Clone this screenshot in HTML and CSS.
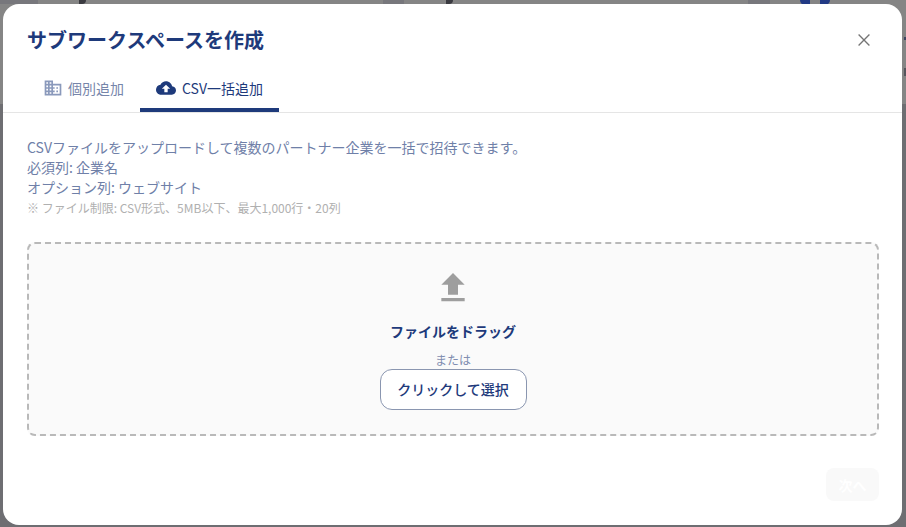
FILE: index.html
```html
<!DOCTYPE html>
<html lang="ja">
<head>
<meta charset="utf-8">
<title>サブワークスペースを作成</title>
<link rel="stylesheet" href="styles.css">
</head>
<body>
<div class="backdrop" aria-hidden="true">
  <i class="cell cell-a"></i>
  <i class="cell cell-b"></i>
  <i class="cell cell-c"></i>
  <i class="mark mark-a"></i>
  <i class="mark mark-b"></i>
  <i class="blue blue-a"></i>
  <i class="blue blue-b"></i>
  <i class="edge edge-a"></i>
  <i class="edge edge-b"></i>
</div>
<div class="modal">
  <header class="head">
    <h2 class="title">サブワークスペースを作成</h2>
    <button class="close" aria-label="閉じる">
      <svg viewBox="0 0 24 24" width="20" height="20"><path d="M5.5 5.5 18.5 18.5M18.5 5.5 5.5 18.5" fill="none" stroke="#757575" stroke-width="1.6"/></svg>
    </button>
  </header>
  <nav class="tabs">
    <div class="tab first">
      <svg viewBox="0 0 24 24" width="20" height="20" fill="#8a99bb"><path d="M12 7V3H2v18h20V7H12zM6 19H4v-2h2v2zm0-4H4v-2h2v2zm0-4H4V9h2v2zm0-4H4V5h2v2zm4 12H8v-2h2v2zm0-4H8v-2h2v2zm0-4H8V9h2v2zm0-4H8V5h2v2zm10 12h-8v-2h2v-2h-2v-2h2v-2h-2V9h8v10zm-2-8h-2v2h2v-2zm0 4h-2v2h2v-2z"/></svg>
      <span>個別追加</span>
    </div>
    <div class="tab active">
      <svg viewBox="0 0 24 24" width="20" height="20" fill="#1e3a7b"><path d="M19.35 10.04C18.67 6.59 15.64 4 12 4 9.11 4 6.6 5.64 5.35 8.04 2.34 8.36 0 10.91 0 14c0 3.31 2.69 6 6 6h13c2.76 0 5-2.24 5-5 0-2.64-2.05-4.78-4.65-4.96zM14 13v4h-4v-4H7l5-5 5 5h-3z"/></svg>
      <span>CSV一括追加</span>
    </div>
  </nav>
  <section class="body">
    <p class="desc">CSVファイルをアップロードして複数のパートナー企業を一括で招待できます。<br>必須列: 企業名<br>オプション列: ウェブサイト</p>
    <p class="note">※ ファイル制限: CSV形式、5MB以下、最大1,000行・20列</p>
    <div class="drop">
      <svg class="upload" viewBox="0 0 24 24" width="40" height="40" fill="#9e9e9e"><path d="M9 16h6v-6h4l-7-7-7 7h4zm-4 2h14v2H5z"/></svg>
      <div class="drag">ファイルをドラッグ</div>
      <div class="or">または</div>
      <button class="pick">クリックして選択</button>
    </div>
  </section>
  <footer class="foot">
    <button class="next" disabled>次へ</button>
  </footer>
</div>
</body>
</html>
```
FILE: styles.css
```css
* { box-sizing: border-box; }
html, body { height: 100%; }
body {
  margin: 0;
  background: #6e6e72;
  padding: 4px 4px 2px 3px;
  font-family: "Noto Sans CJK JP", "Noto Sans", sans-serif;
  overflow: hidden;
}
.backdrop {
  position: absolute;
  inset: 0 0 auto 0;
  height: 104px;
  background: #858585;
}
.backdrop i { position: absolute; display: block; }
.cell { top: 0; height: 4px; background: #77777c; }
.cell-a { left: 0; width: 38px; }
.cell-b { left: 383px; width: 21px; }
.cell-c { left: 748px; width: 22px; }
.mark { top: 0; width: 7px; height: 4px; background: #3a3a40; border-radius: 0 0 4px 0; }
.mark-a { left: 79px; }
.mark-b { left: 446px; }
.blue { top: 0; width: 10px; height: 5px; background: #223a85; }
.blue-a { left: 800px; border-radius: 0 0 0 6px; }
.blue-b { left: 820px; border-radius: 0 0 6px 0; }
.edge { left: 904px; width: 2px; background: #3d4460; }
.edge-a { top: 37px; height: 3px; }
.edge-b { top: 68px; height: 8px; background: #55555c; }
.modal {
  position: relative;
  height: 521px;
  background: #fff;
  border-radius: 16px;
  display: flex;
  flex-direction: column;
}
.head {
  display: flex;
  align-items: flex-start;
  justify-content: space-between;
  padding: 20px 24px 0;
  height: 65px;
}
.title {
  margin: 0;
  font-size: 20px;
  line-height: 32px;
  font-weight: 700;
  color: #1e3a7b;
}
.close {
  border: 0;
  background: none;
  padding: 0;
  width: 20px;
  height: 20px;
  margin: 6px 4px 0 0;
  display: flex;
}
.tabs {
  display: flex;
  height: 44px;
  padding-left: 24px;
  border-bottom: 1px solid #e5e5e5;
}
.tab {
  display: flex;
  align-items: center;
  gap: 6px;
  padding: 0 16px 5px;
  height: 43px;
  font-size: 14px;
  color: #7685aa;
}
.tab.first { gap: 5px; }
.tab.active {
  color: #1e3a7b;
  border-bottom: 4px solid #1e3a7b;
  padding-bottom: 1px;
}
.body { padding: 24px 23px 0 24px; flex: 1; }
.desc {
  margin: 0;
  font-size: 14px;
  line-height: 20px;
  color: #6f80a8;
}
.note {
  margin: 2px 0 0;
  font-size: 12px;
  line-height: 18px;
  color: #b0b0b0;
}
.drop {
  margin-top: 25px;
  height: 194px;
  border: 2px dashed #b9b9b9;
  border-radius: 8px;
  background: #fafafa;
  display: flex;
  flex-direction: column;
  align-items: center;
  padding-top: 24px;
}
.upload { display: block; }
.drag {
  margin-top: 13px;
  font-size: 14px;
  line-height: 20px;
  font-weight: 700;
  color: #1e3a7b;
}
.or {
  margin-top: 10px;
  font-size: 12px;
  line-height: 18px;
  color: #7f8db0;
}
.pick {
  width: 147px;
  height: 41px;
  padding: 0 0 2px;
  background: #fff;
  border: 1px solid #8a96b0;
  border-radius: 12px;
  font: 500 14px "Noto Sans CJK JP", sans-serif;
  color: #1e3a7b;
}
.foot {
  display: flex;
  justify-content: flex-end;
  padding: 0 23px 24px 24px;
}
.next {
  width: 53px;
  height: 33px;
  border: 0;
  border-radius: 8px;
  background: #f9f9f9;
  color: #fff;
  font: 700 14px "Noto Sans CJK JP", sans-serif;
}
```
